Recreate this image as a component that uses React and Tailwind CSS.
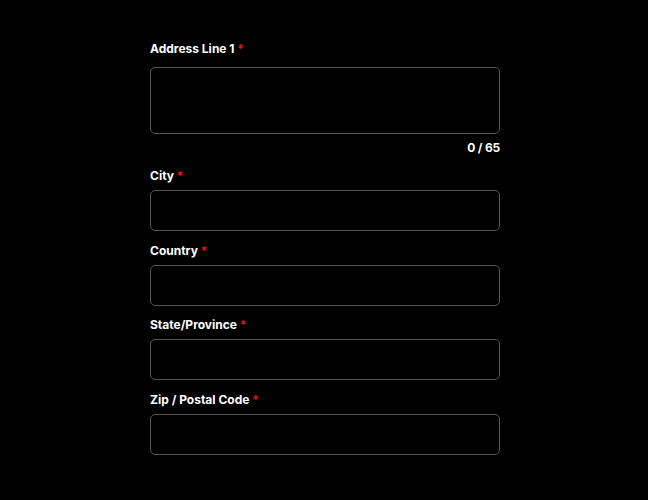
const font = { fontFamily: 'Inter, "Liberation Sans", sans-serif' };

function Label({ children, className = '' }) {
    return (
        <label className={`block h-4 text-[12px] leading-4 font-bold text-white ${className}`}>
            {children} <span className="text-[#e0141e]">*</span>
        </label>
    );
}

function Field({ label }) {
    return (
        <div>
            <Label className="mb-1.5">{label}</Label>
            <input
                type="text"
                className="block h-[41px] w-full rounded-[5px] border border-[#555555] bg-black px-3 text-sm text-white outline-none"
            />
        </div>
    );
}

export default function App() {
    return (
        <div className="min-h-[500px] w-full bg-black" style={font}>
            <div className="ml-[150px] w-[350px] pt-[41px]">
                <Label className="mb-[10px]">Address Line 1</Label>
                <textarea className="block h-[67px] w-full resize-none rounded-[5px] border border-[#555555] bg-black px-3 py-2 text-sm text-white outline-none" />
                <p className="mt-[6px] h-4 text-right text-[12px] leading-4 font-bold tracking-[-0.2px] text-white">0 / 65</p>

                <div className="mt-[12px] flex flex-col gap-[11.5px]">
                    <Field label="City" />
                    <Field label="Country" />
                    <Field label="State/Province" />
                    <Field label="Zip / Postal Code" />
                </div>
            </div>
        </div>
    );
}
